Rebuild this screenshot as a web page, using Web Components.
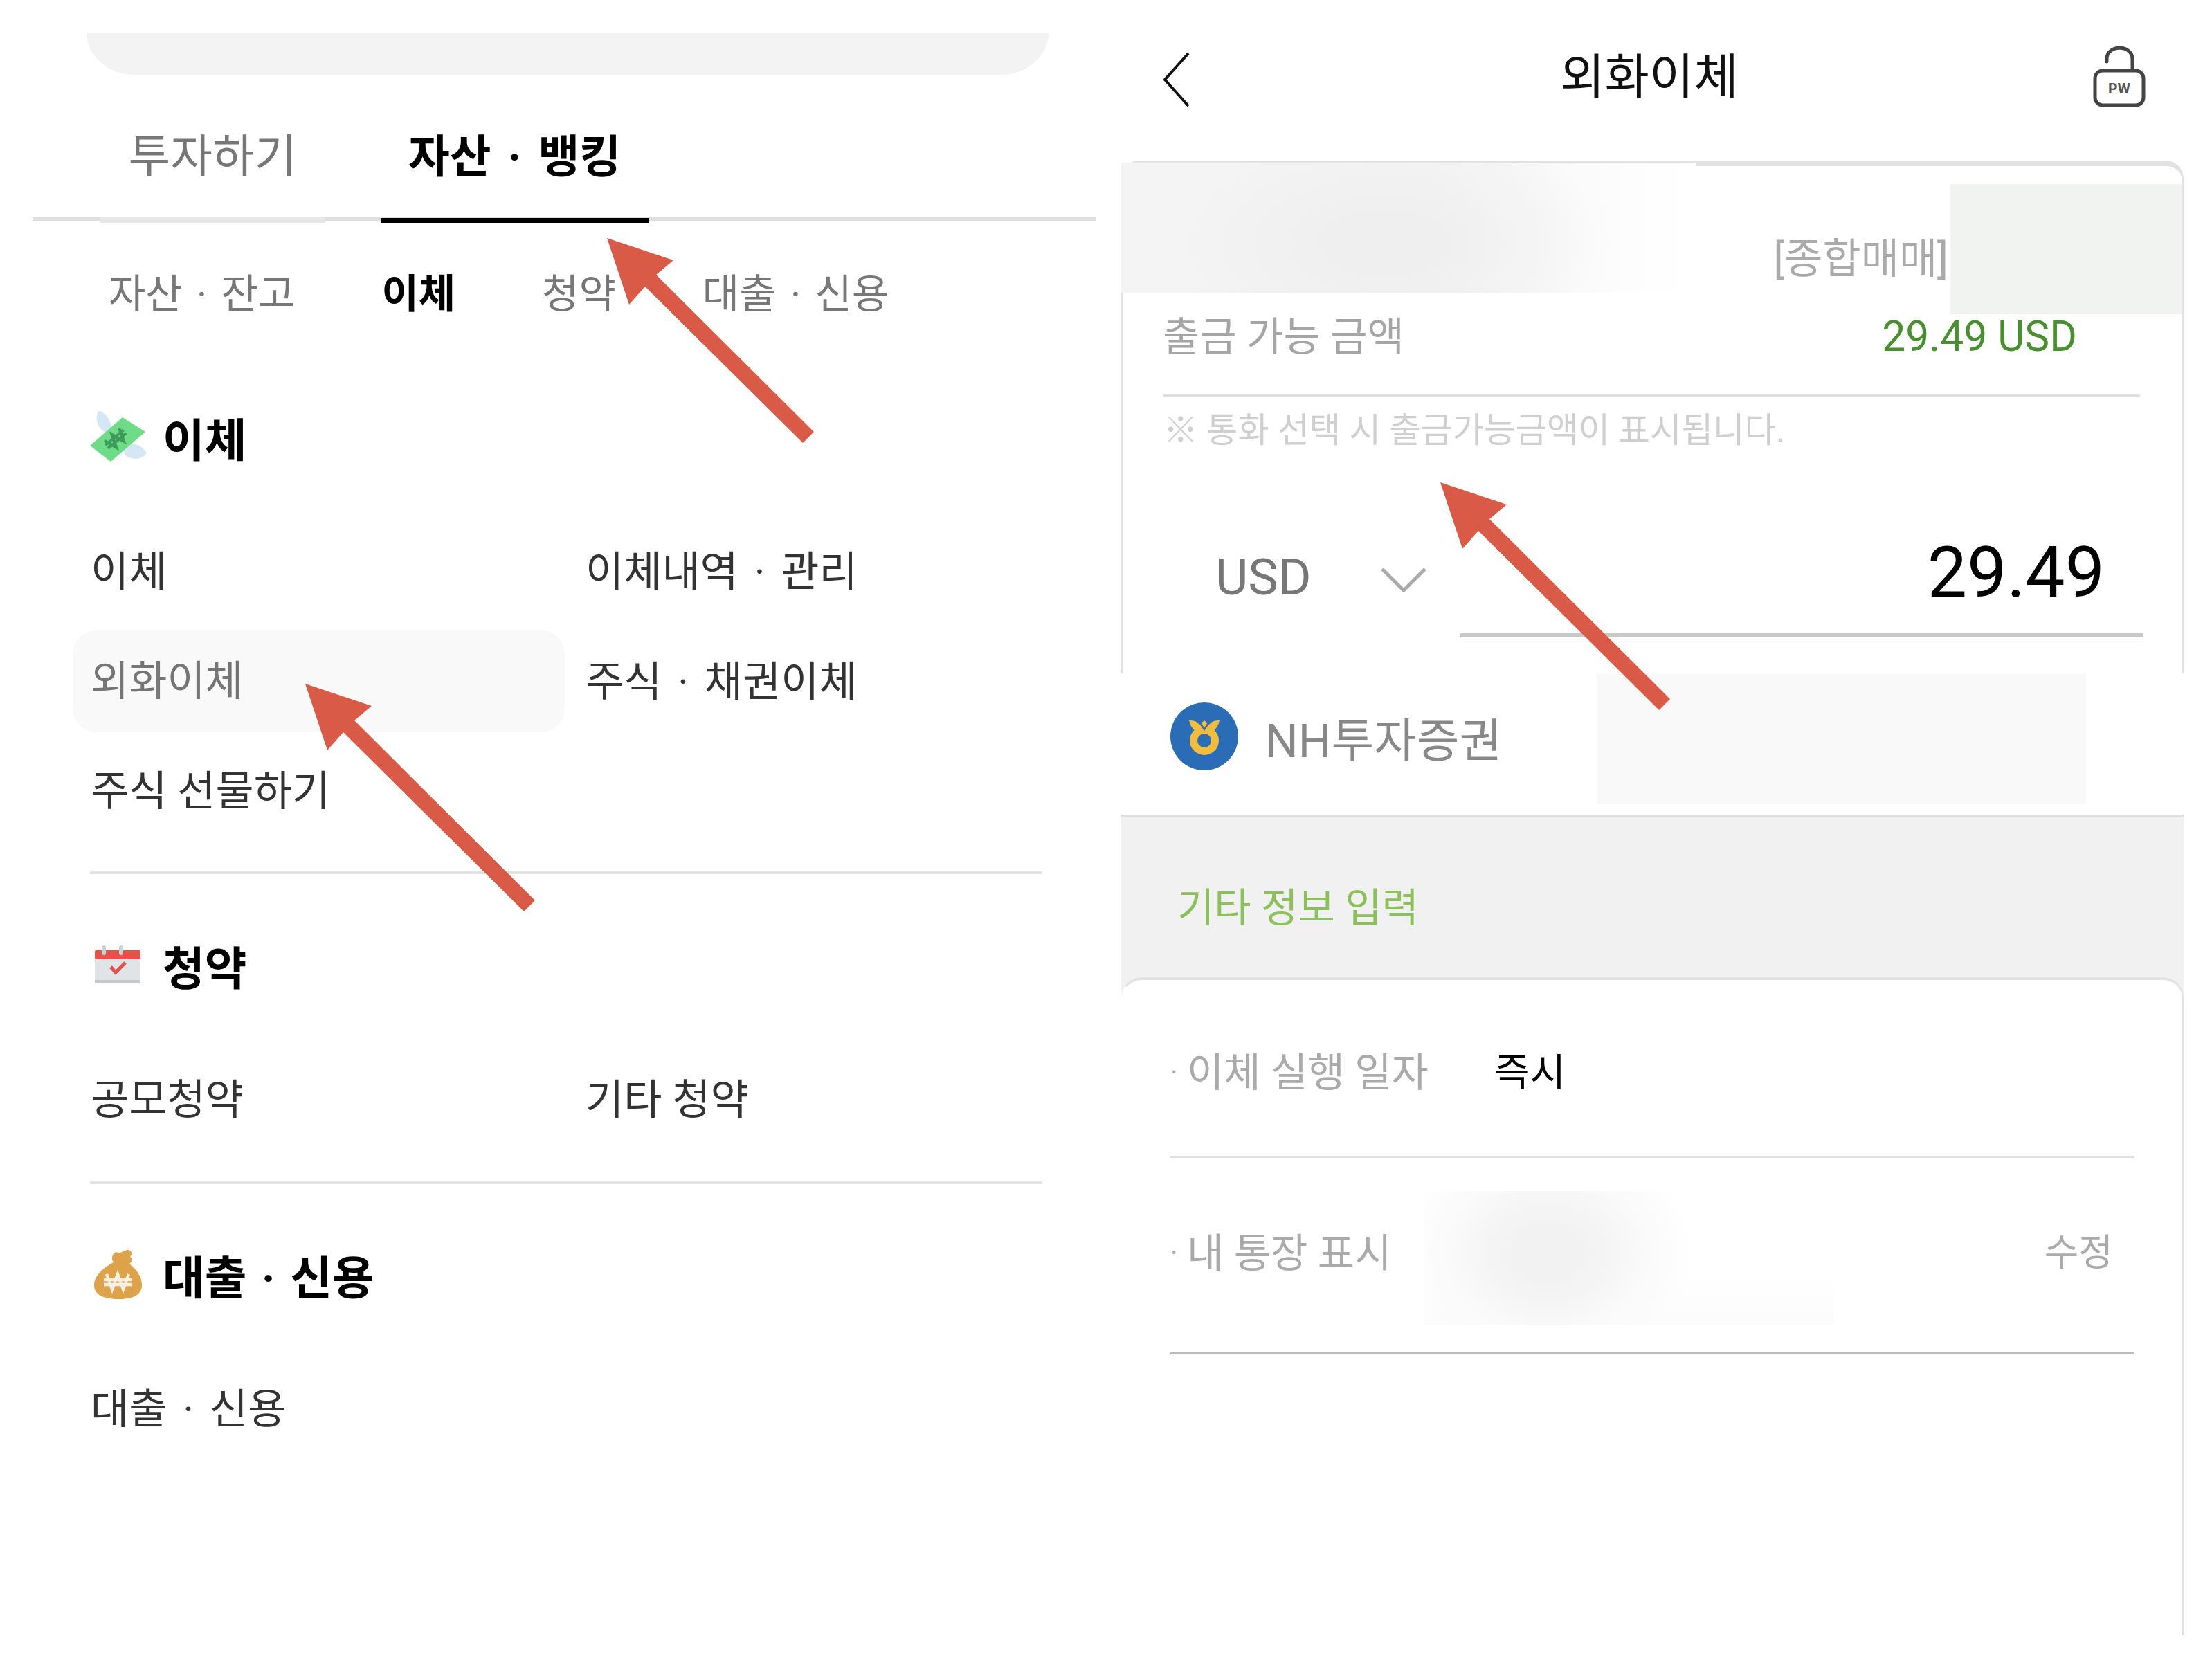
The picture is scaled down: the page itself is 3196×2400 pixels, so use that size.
<!DOCTYPE html>
<html lang="ko">
<head>
<meta charset="utf-8">
<title>외화이체</title>
<style>
  html, body { margin: 0; background: #fff; }
  body { font-family: Roboto, "Noto Sans CJK KR", sans-serif; }
</style>
</head>
<body>
<app-shell>
  <menu-panel></menu-panel>
  <transfer-panel></transfer-panel>

  <blur-patch style="left:1620px;top:235px;width:830px;height:188px;background:radial-gradient(ellipse 330px 170px at 46% 62%,#efefef 20%,transparent 100%),linear-gradient(90deg,#f4f4f4 55%,#fdfdfd 88%,#fff)"></blur-patch>
  <blur-patch style="left:2818px;top:266px;width:334px;height:188px;background:#f1f3f0"></blur-patch>
  <blur-patch style="left:2307px;top:973px;width:707px;height:189px;background:#f9f9f9"></blur-patch>
  <blur-patch style="left:2058px;top:1721px;width:592px;height:194px;background:radial-gradient(ellipse 210px 170px at 30% 46%,#f2f2f2 25%,#fbfbfb 75%,transparent 100%),linear-gradient(180deg,#fff 60%,#fcfcfc 100%)"></blur-patch>

  <red-arrow x="877" y="344" tail="299"></red-arrow>
  <red-arrow x="441" y="988" tail="332"></red-arrow>
  <red-arrow x="2081" y="697" tail="332"></red-arrow>
</app-shell>

<script>
const FONT = 'Roboto, "Noto Sans CJK KR", sans-serif';

class AppShell extends HTMLElement {
  constructor() {
    super();
    this.attachShadow({ mode: 'open' });
    this.shadowRoot.innerHTML = `
      <style>
        :host { display: flex; position: relative; width: 3196px; height: 2400px; overflow: hidden; font-family: ${FONT}; }
      </style>
      <slot></slot>
    `;
  }
}

// redaction smudges and arrows sit on top of the screenshot content
class BlurPatch extends HTMLElement {
  constructor() {
    super();
    this.attachShadow({ mode: 'open' });
    this.shadowRoot.innerHTML = `<style>:host { display: block; position: absolute; }</style>`;
  }
}

class RedArrow extends HTMLElement {
  connectedCallback() {
    const x = +this.getAttribute('x');
    const y = +this.getAttribute('y');
    const t = +this.getAttribute('tail');
    this.attachShadow({ mode: 'open' });
    this.shadowRoot.innerHTML = `
      <style>
        :host { display: block; position: absolute; left: ${x}px; top: ${y}px; width: ${t + 2}px; height: ${t + 2}px; }
        svg { display: block; }
      </style>
      <svg width="${t + 2}" height="${t + 2}">
        <polygon fill="#d95b47" points="0,0 96,32 71,53 ${t},${t - 19} ${t - 16},${t - 3} 55,70 32,96"/>
      </svg>
    `;
  }
}

class TopTabs extends HTMLElement {
  constructor() {
    super();
    this.attachShadow({ mode: 'open' });
    this.shadowRoot.innerHTML = `
      <style>
        :host { display: flex; align-items: flex-start; height: 205px; width: 1440px; margin-left: 47px; border-bottom: 7px solid #dedede; padding-left: 97px; gap: 80px; }
        div { box-sizing: border-box; height: 214px; padding-top: 74px; line-height: 90px; text-align: center; font-size: 65px; }
        .off { width: 326px; color: #777; border-bottom: 9px solid #e6e6e6; font-size: 66px; }
        .on { width: 387px; color: #000; font-weight: 700; border-bottom: 7px solid #000; word-spacing: 8px; }
      </style>
      <div class="off">투자하기</div>
      <div class="on">자산 · 뱅킹</div>
    `;
  }
}

class SubTabs extends HTMLElement {
  constructor() {
    super();
    this.attachShadow({ mode: 'open' });
    this.shadowRoot.innerHTML = `
      <style>
        :host { display: flex; align-items: center; height: 200px; padding-left: 157px; gap: 125px; font-size: 58px; color: #777; word-spacing: 6px; margin-bottom: 61px; }
        .on { color: #000; font-weight: 700; }
      </style>
      <span>자산 · 잔고</span>
      <span class="on">이체</span>
      <span>청약</span>
      <span>대출 · 신용</span>
    `;
  }
}

class MenuSection extends HTMLElement {
  constructor() {
    super();
    this.attachShadow({ mode: 'open' });
    this.shadowRoot.innerHTML = `
      <style>
        :host { display: block; width: 1401px; margin-left: 105px; }
        header { display: flex; align-items: center; height: 100px; margin-bottom: 66px; padding-left: 22px; font-size: 66px; font-weight: 700; color: #000; word-spacing: 5px; }
        .icon { width: 108px; height: 100px; flex: none; }
        ::slotted(svg) { margin-left: 3px; }
        main { display: grid; grid-template-columns: 711px 1fr; grid-auto-rows: 147px; row-gap: 11.5px; }
        footer { height: 4px; margin: var(--before, 48px) 0 var(--after, 81px) 25px; background: #e2e2e2; }
        :host([last]) footer { display: none; }
      </style>
      <header><div class="icon"><slot name="icon"></slot></div><span id="title"></span></header>
      <main><slot></slot></main>
      <footer></footer>
    `;
  }
  connectedCallback() {
    this.shadowRoot.querySelector('#title').textContent = this.getAttribute('heading');
  }
}

class MenuItem extends HTMLElement {
  constructor() {
    super();
    this.attachShadow({ mode: 'open' });
    this.shadowRoot.innerHTML = `
      <style>
        :host { display: flex; align-items: center; padding-left: 26px; border-radius: 34px; font-size: 60px; color: #333; word-spacing: 8px; }
        :host([active]) { background: #f9f9f9; color: #757575; margin: 5px 0 -5px; padding-bottom: 12px; box-sizing: border-box; }
        :host([right]) { padding-left: 30px; }
        :host([tight]) { word-spacing: 0; }
      </style>
      <slot></slot>
    `;
  }
}

class MenuPanel extends HTMLElement {
  constructor() {
    super();
    this.attachShadow({ mode: 'open' });
    this.shadowRoot.innerHTML = `
      <style>
        :host { display: block; flex: none; width: 1598px; padding-top: 48px; box-sizing: border-box; }
        .search { width: 1390px; height: 60px; margin-left: 125px; background: #f3f3f3; border-radius: 0 0 70px 70px / 0 0 60px 60px; }
        svg { display: block; }
      </style>
      <div class="search"></div>
      <top-tabs></top-tabs>
      <sub-tabs></sub-tabs>

      <menu-section heading="이체" style="--after:81px">
        <svg slot="icon" width="90" height="100" viewBox="0 0 90 100">
          <path d="M12 13 C20 13 30 24 31 38 L23 44 C12 40 6 24 12 13Z" fill="#d5e6f5"/>
          <path d="M82 74 C74 84 60 84 50 76 L47 62 C60 56 76 62 82 74Z" fill="#d5e6f5"/>
          <polygon points="0,63 47,22 80,43 30,86" fill="#6edc86"/>
          <g stroke="#3c9a5b" stroke-width="4" fill="none" transform="rotate(-40 38 53)">
            <path d="M23 44 L30 63 L37 44 L44 63 L51 44"/>
            <path d="M20 50 H54 M20 56 H54"/>
          </g>
        </svg>
        <menu-item>이체</menu-item>
        <menu-item right>이체내역 · 관리</menu-item>
        <menu-item active>외화이체</menu-item>
        <menu-item right>주식 · 채권이체</menu-item>
        <menu-item tight>주식 선물하기</menu-item>
      </menu-section>

      <menu-section heading="청약" style="--before:50px;--after:80px">
        <svg slot="icon" width="90" height="100" viewBox="0 0 90 100">
          <rect x="7" y="29" width="66" height="48" rx="2" fill="#e1e4e7"/>
          <rect x="7" y="72" width="66" height="5" fill="#c6c9cc"/>
          <rect x="7" y="29" width="66" height="13" rx="2" fill="#e8504a"/>
          <rect x="17" y="22" width="6" height="14" rx="3" fill="#cdd0d4"/>
          <rect x="42" y="22" width="6" height="14" rx="3" fill="#cdd0d4"/>
          <path d="M30 53 L37 61 L51 47" fill="none" stroke="#e5524b" stroke-width="5"/>
        </svg>
        <menu-item tight>공모청약</menu-item>
        <menu-item right tight>기타 청약</menu-item>
      </menu-section>

      <menu-section heading="대출 · 신용" last>
        <svg slot="icon" width="90" height="100" viewBox="0 0 90 100">
          <path d="M38 18 C44 22 50 14 56 15 C62 17 60 23 58 25 C62 28 62 32 57 35 C68 44 75 54 75 66 C75 80 62 86 42 86 C20 86 6 80 6 66 C6 52 20 40 34 33 C30 28 32 20 38 18Z" fill="#dda24a"/>
          <g stroke="#f6efe4" stroke-width="4.5" fill="none">
            <path d="M24 50 L32 72 L40 50 L48 72 L56 50"/>
            <path d="M20 58 H60 M20 65 H60"/>
          </g>
        </svg>
        <menu-item>대출 · 신용</menu-item>
      </menu-section>
    `;
  }
}

class TransferCard extends HTMLElement {
  constructor() {
    super();
    this.attachShadow({ mode: 'open' });
    this.shadowRoot.innerHTML = `
      <style>
        :host { display: block; margin-left: 22px; width: 1535px; box-sizing: border-box; border: solid #e2e2e2; border-width: 8px 3px 0; border-radius: 26px 26px 0 0; }
        .account { height: 202px; box-sizing: border-box; padding: 90px 337px 0 0; text-align: right; font-size: 60px; line-height: 90px; color: #aaa; }
        .balance { display: flex; justify-content: space-between; height: 131px; box-sizing: border-box; margin: 0 60px 0 57px; padding-right: 91px; border-bottom: 4px solid #e0e0e0; font-size: 58px; line-height: 90px; color: #a5a5a5; }
        .balance b { font-weight: 400; color: #4a8f2f; font-size: 60.5px; }
        .note { height: 90px; padding-top: 4px; margin-left: 58px; font-size: 49.5px; line-height: 90px; color: #cfcfcf; }
        .amount { display: flex; padding: 95px 56px 52px 133px; }
        .cur { display: flex; align-items: center; width: 354px; height: 144px; flex: none; font-size: 73px; color: #777; }
        .cur span { width: 239px; }
        .cur svg { margin-top: 8px; }
        .field { flex: 1; height: 125px; padding: 0 55px 28px 0; border-bottom: 6px solid #c8c8c8; text-align: right; font-size: 102px; line-height: 130px; color: #000; }
        svg { display: block; }
      </style>
      <div class="account">[종합매매]</div>
      <div class="balance"><span>출금 가능 금액</span><b>29.49 USD</b></div>
      <div class="note">※ 통화 선택 시 출금가능금액이 표시됩니다.</div>
      <div class="amount">
        <div class="cur">
          <span>USD</span>
          <svg width="66" height="36" viewBox="0 0 66 36"><path d="M2 2 L33 33 L64 2" fill="none" stroke="#aaa" stroke-width="5"/></svg>
        </div>
        <div class="field">29.49</div>
      </div>
    `;
  }
}

class BankRow extends HTMLElement {
  constructor() {
    super();
    this.attachShadow({ mode: 'open' });
    this.shadowRoot.innerHTML = `
      <style>
        :host { display: flex; align-items: center; gap: 38px; margin-left: 22px; width: 1535px; height: 207px; padding: 0 0 22px 70px; box-sizing: border-box; border-bottom: 3px solid #ddd; font-size: 67px; color: #888; }
        svg { display: block; flex: none; }
      </style>
      <svg width="100" height="100" viewBox="0 0 100 100">
        <circle cx="50" cy="50" r="49" fill="#2a6cb5"/>
        <path d="M28 27 Q38 26 43 33 L50 27 L57 33 Q62 26 72 27 Q70 37 63 42 L37 42 Q30 37 28 27Z" fill="#f2bc3c"/>
        <circle cx="50" cy="56" r="15.5" fill="none" stroke="#f2bc3c" stroke-width="11"/>
        <path d="M41 26 L50 40 L59 26" fill="none" stroke="#2a6cb5" stroke-width="2.5"/>
      </svg>
      <span>NH투자증권</span>
    `;
  }
}

class ExtraInfo extends HTMLElement {
  constructor() {
    super();
    this.attachShadow({ mode: 'open' });
    this.shadowRoot.innerHTML = `
      <style>
        :host { display: block; margin-left: 22px; width: 1535px; background: #f1f1f1; }
        h2 { margin: 0; height: 232px; box-sizing: border-box; padding: 87px 0 0 81px; font-size: 58px; line-height: 90px; font-weight: 400; color: #8cc05a; }
        .card { height: 951px; box-sizing: border-box; background: #fff; border: solid #e2e2e2; border-width: 4px 2px 0 0; border-left: 2px solid #fff; border-radius: 30px 30px 0 0; }
      </style>
      <h2>기타 정보 입력</h2>
      <div class="card"><slot></slot></div>
    `;
  }
}

class InfoRow extends HTMLElement {
  constructor() {
    super();
    this.attachShadow({ mode: 'open' });
    this.shadowRoot.innerHTML = `
      <style>
        :host { display: flex; box-sizing: border-box; margin: 0 69px; height: var(--h, 257px); padding-top: var(--top, 89px); border-bottom: 3px solid var(--line, #e0e0e0); font-size: 58px; line-height: 90px; color: #aaa; }
        .dot { width: 24px; flex: none; font-size: 40px; }
        ::slotted([slot=value]) { color: #000; margin-left: 95px; font-size: 56px; }
        ::slotted([slot=edit]) { margin-left: auto; padding-right: 31px; font-size: 54px; }
      </style>
      <span class="dot">·</span><slot></slot><slot name="value"></slot><slot name="edit"></slot>
    `;
  }
}

class TransferPanel extends HTMLElement {
  constructor() {
    super();
    this.attachShadow({ mode: 'open' });
    this.shadowRoot.innerHTML = `
      <style>
        :host { display: block; flex: none; width: 1598px; }
        header { display: grid; grid-template-columns: 1fr auto 1fr; align-items: center; height: 218px; margin-bottom: 14px; padding: 0 96px 0 82px; font-size: 70px; color: #111; }
        header .title { padding-bottom: 8px; margin-right: 14px; }
        header .back { margin-top: 12px; }
        header .lock { justify-self: end; margin-top: 4px; }
        svg { display: block; }
        text { font-family: Roboto, sans-serif; font-weight: 700; font-size: 21px; fill: #555; }
      </style>
      <header>
        <svg class="back" width="40" height="80" viewBox="0 0 40 80"><path d="M37 2 L3 40 L37 78" fill="none" stroke="#111" stroke-width="4"/></svg>
        <div class="title">외화이체</div>
        <svg class="lock" width="76" height="90" viewBox="0 0 76 90">
          <path d="M20 23 V19 C20 -2 57 -2 57 19 V36" fill="none" stroke="#444" stroke-width="5" stroke-linecap="round"/>
          <rect x="3" y="36" width="70" height="50" rx="11" fill="#fff" stroke="#444" stroke-width="5"/>
          <text x="38" y="69" text-anchor="middle">PW</text>
        </svg>
      </header>
      <transfer-card></transfer-card>
      <bank-row></bank-row>
      <extra-info>
        <info-row>이체 실행 일자<span slot="value">즉시</span></info-row>
        <info-row style="--h:284px;--top:93px;--line:#bbb">내 통장 표시<span slot="edit">수정</span></info-row>
      </extra-info>
    `;
  }
}

customElements.define('app-shell', AppShell);
customElements.define('blur-patch', BlurPatch);
customElements.define('red-arrow', RedArrow);
customElements.define('top-tabs', TopTabs);
customElements.define('sub-tabs', SubTabs);
customElements.define('menu-item', MenuItem);
customElements.define('menu-section', MenuSection);
customElements.define('menu-panel', MenuPanel);
customElements.define('transfer-card', TransferCard);
customElements.define('bank-row', BankRow);
customElements.define('info-row', InfoRow);
customElements.define('extra-info', ExtraInfo);
customElements.define('transfer-panel', TransferPanel);
</script>
</body>
</html>
